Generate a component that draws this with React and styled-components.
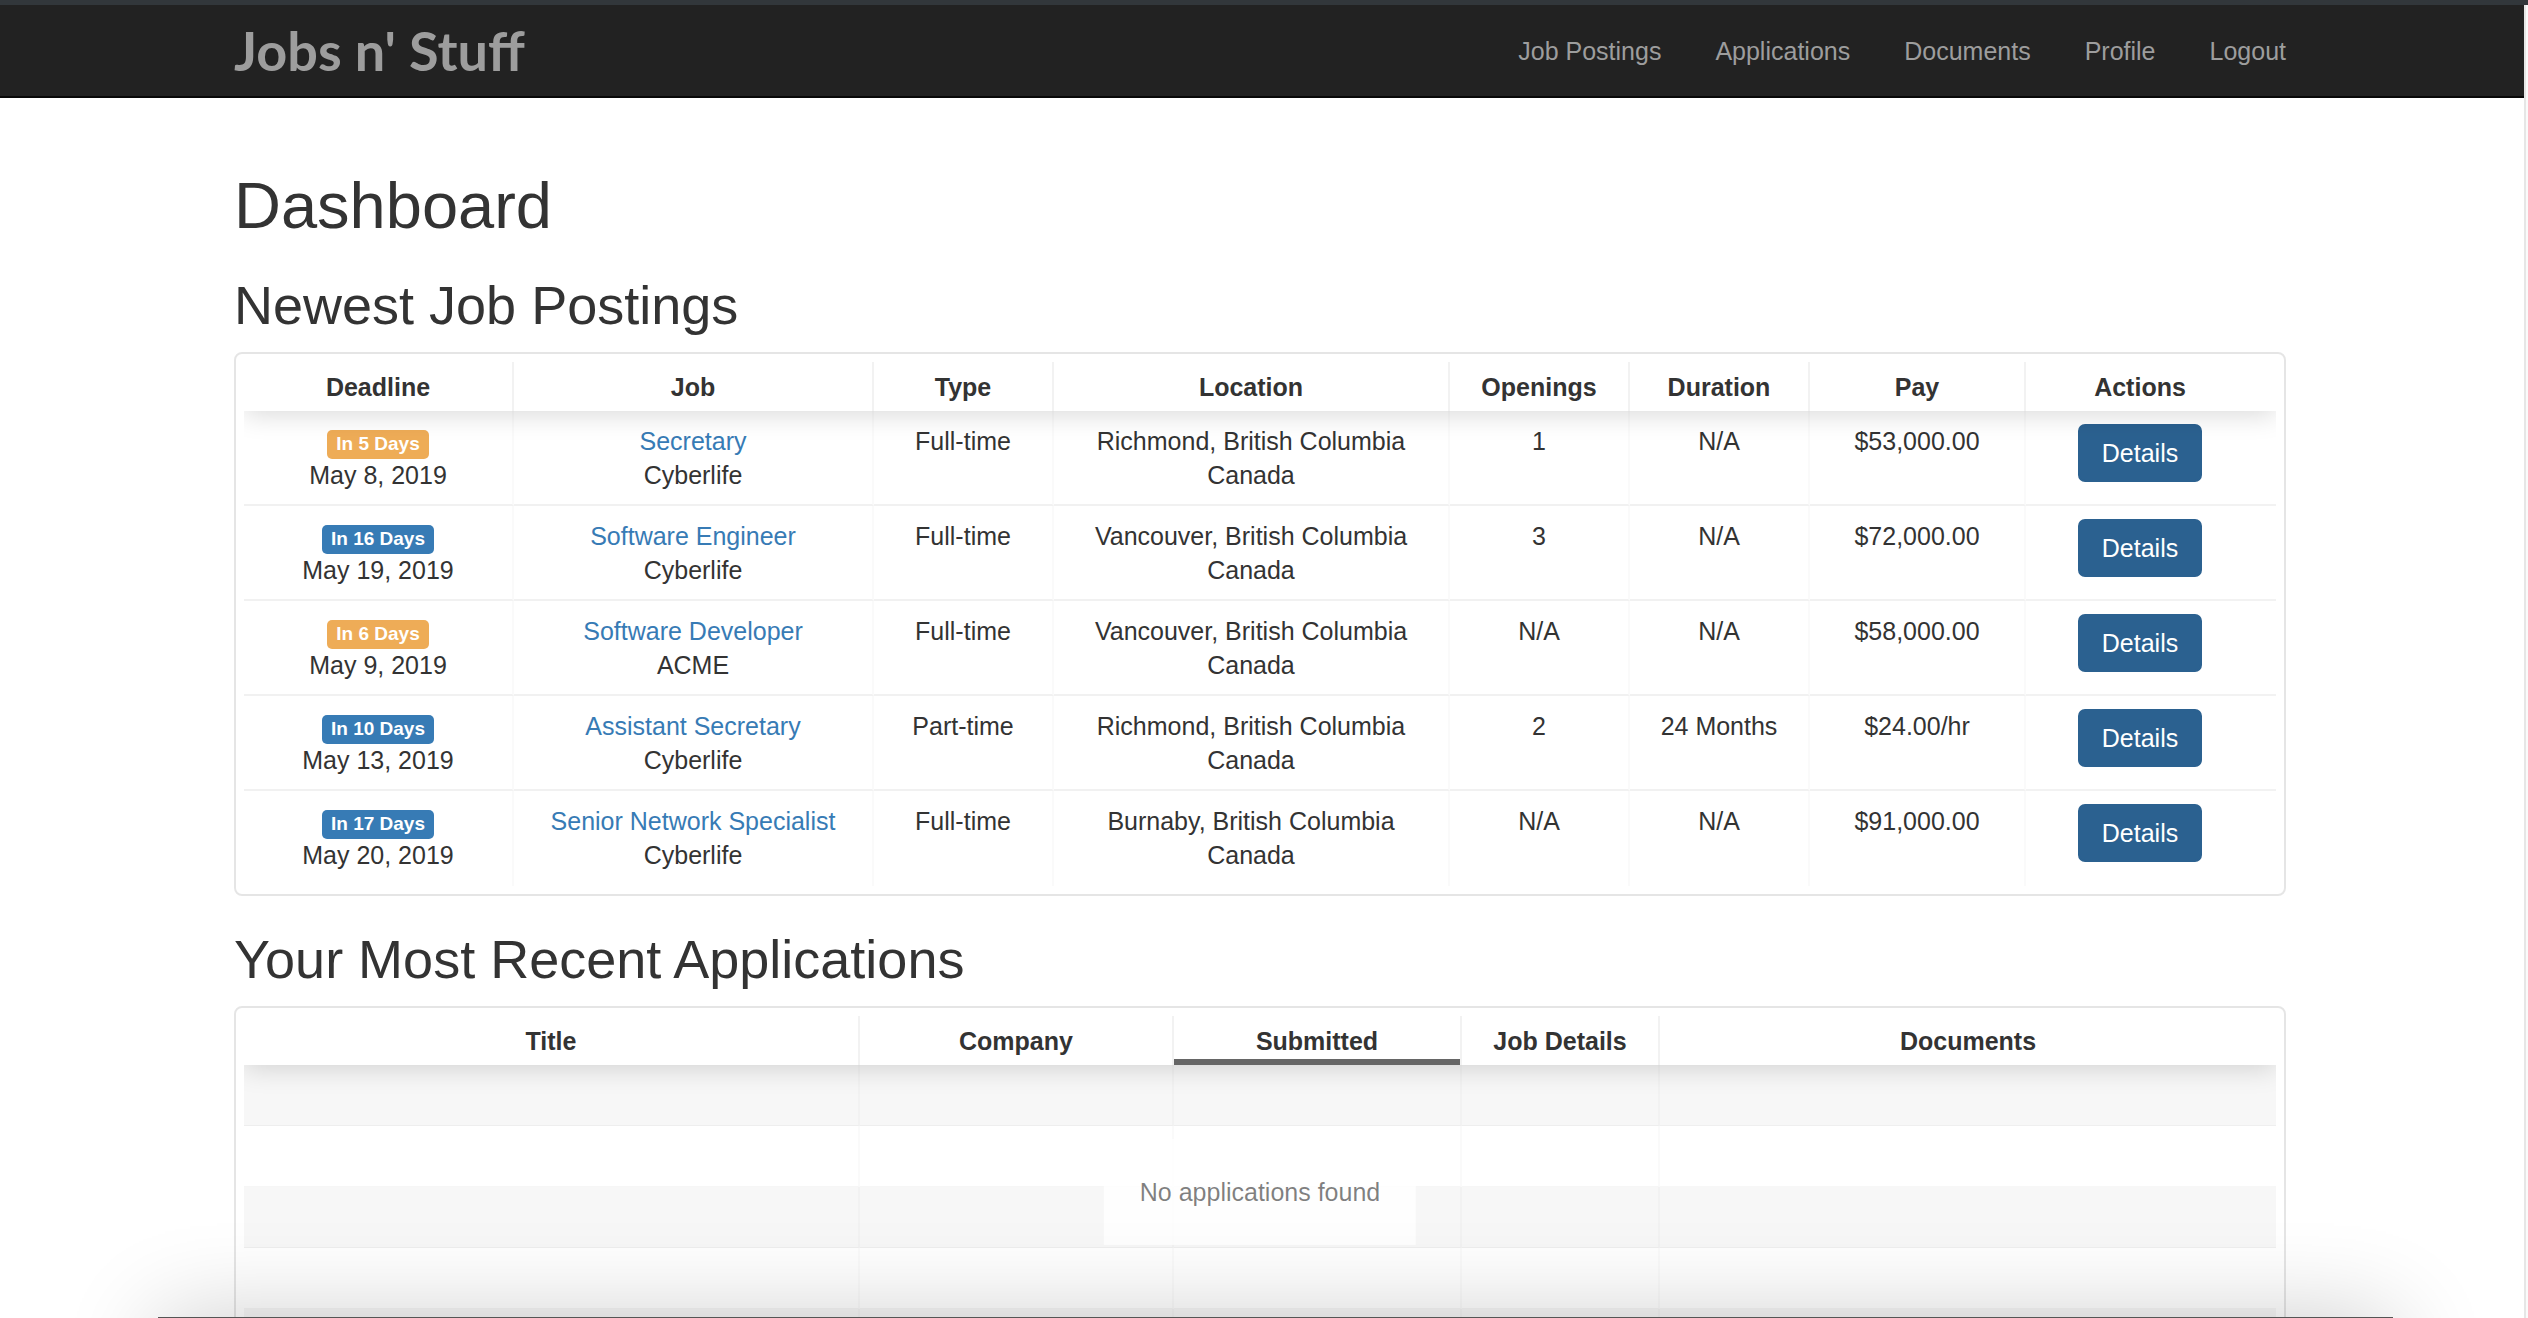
import React from "react";
import styled, { createGlobalStyle } from "styled-components";

const GlobalStyle = createGlobalStyle`
  *, *::before, *::after { box-sizing: border-box; }
  body {
    margin: 0;
    background: #fff;
    color: #333;
    font-family: "Liberation Sans", Arial, Helvetica, sans-serif;
    font-size: 25px;
    line-height: 34px;
  }
`;

const Page = styled.div`
  height: 100vh;
  overflow: hidden;
  position: relative;
  display: flex;
  flex-direction: column;
`;

const WindowEdge = styled.div`
  flex: none;
  height: 5px;
  background: #32373b;
`;

const Viewport = styled.div`
  flex: 1;
  min-height: 0;
  display: flex;
`;

const Content = styled.div`
  flex: 1;
  min-width: 0;
`;

const ScrollTrack = styled.div`
  flex: none;
  width: 4px;
  border-left: 2px solid #e6e6e6;
  background: #fafafa;
`;

const Navbar = styled.header`
  padding: 0 28px 0 24px;
  background: #222;
  border-bottom: 2px solid #080808;
`;

const NavInner = styled.div`
  max-width: 2052px;
  height: 91px;
  margin: 0 auto;
  display: flex;
  align-items: center;
  justify-content: space-between;
`;

const Brand = styled.a`
  color: #9d9d9d;
  font-family: Lato, "Open Sans", sans-serif;
  font-size: 54px;
  font-weight: 700;
  line-height: 65px;
  text-decoration: none;
`;

const NavLinks = styled.nav`
  display: flex;
  gap: 54px;
`;

const NavLink = styled.a`
  color: #9d9d9d;
  line-height: 36px;
  text-decoration: none;
`;

const Main = styled.main`
  padding: 72px 28px 0 24px;
`;

const Container = styled.div`
  max-width: 2052px;
  margin: 0 auto;
`;

const Title = styled.h1`
  margin: 0;
  font-size: 65px;
  font-weight: 400;
  line-height: 72px;
`;

const SectionTitle = styled.h2`
  margin: 33px 0 17px;
  font-size: 54px;
  font-weight: 400;
  line-height: 60px;
`;

const Panel = styled.div`
  position: relative;
  padding: 8px;
  border: 2px solid rgba(0, 0, 0, 0.1);
  border-radius: 8px;
`;

const TableClip = styled.div`
  overflow: hidden;
`;

const Table = styled.table`
  width: 100%;
  table-layout: fixed;
  border-collapse: separate;
  border-spacing: 0;
  text-align: center;
`;

const Head = styled.thead`
  position: relative;
  z-index: 1;
  box-shadow: 0 4px 27px rgba(0, 0, 0, 0.15);
`;

const HeadCell = styled.th`
  width: ${(p) => (p.$width ? `${p.$width}px` : "auto")};
  padding: 8px 9px 7px;
  padding-right: ${(p) => (p.$gutter ? "31px" : "9px")};
  border-right: 2px solid rgba(0, 0, 0, 0.05);
  box-shadow: ${(p) => (p.$sorted ? "inset 0 -6px 0 rgba(0, 0, 0, 0.6)" : "none")};
  font-weight: 700;
  &:last-child { border-right: 0; }
`;

const Cell = styled.td`
  height: 95px;
  padding: 13px 9px 0;
  padding-right: ${(p) => (p.$gutter ? "31px" : "9px")};
  border-right: 2px solid rgba(0, 0, 0, 0.02);
  border-bottom: 2px solid rgba(0, 0, 0, 0.05);
  vertical-align: top;
  &:last-child { border-right: 0; }
  tr:last-child > & { border-bottom: 0; }
`;

const EmptyRow = styled.tr`
  background: ${(p) => (p.$striped ? "rgba(0, 0, 0, 0.03)" : "transparent")};
`;

const EmptyCell = styled.td`
  height: 61px;
  padding: 0;
  border-right: 2px solid rgba(0, 0, 0, 0.02);
  border-bottom: 1px solid rgba(0, 0, 0, 0.03);
  &:last-child { border-right: 0; }
`;

const Badge = styled.span`
  display: inline-block;
  padding: 4px 9px 6px;
  border-radius: 5px;
  background: ${(p) => (p.$soon ? "#eeac57" : "#377bb5")};
  color: #fff;
  font-size: 19px;
  font-weight: 700;
  line-height: 19px;
`;

const Line = styled.div`
  height: 34px;
`;

const JobLink = styled.a`
  color: #377bb5;
  text-decoration: none;
`;

const DetailsButton = styled.button`
  display: block;
  margin: 0 auto;
  padding: 10px 22px;
  border: 2px solid #2b6190;
  border-radius: 7px;
  background: #2b6190;
  color: #fff;
  font: inherit;
  line-height: 34px;
`;

const EmptyMessage = styled.div`
  position: absolute;
  top: 131px;
  left: 50%;
  transform: translateX(-50%);
  padding: 36px;
  background: rgba(255, 255, 255, 0.8);
  color: rgba(0, 0, 0, 0.5);
  white-space: nowrap;
`;

/* Upper edge of the window in front, with the shadow it casts */
const FrontWindow = styled.div`
  position: absolute;
  z-index: 2;
  left: 158px;
  right: 135px;
  bottom: -299px;
  height: 300px;
  background: #555;
  box-shadow: 0 0 90px rgba(0, 0, 0, 0.2);
`;

const navItems = ["Job Postings", "Applications", "Documents", "Profile", "Logout"];

const jobColumns = [
  ["Deadline", 270],
  ["Job", 360],
  ["Type", 180],
  ["Location", 396],
  ["Openings", 180],
  ["Duration", 180],
  ["Pay", 216],
  ["Actions", 0],
];

const jobs = [
  { days: 5, date: "May 8, 2019", title: "Secretary", company: "Cyberlife", type: "Full-time", city: "Richmond", openings: "1", duration: "N/A", pay: "$53,000.00" },
  { days: 16, date: "May 19, 2019", title: "Software Engineer", company: "Cyberlife", type: "Full-time", city: "Vancouver", openings: "3", duration: "N/A", pay: "$72,000.00" },
  { days: 6, date: "May 9, 2019", title: "Software Developer", company: "ACME", type: "Full-time", city: "Vancouver", openings: "N/A", duration: "N/A", pay: "$58,000.00" },
  { days: 10, date: "May 13, 2019", title: "Assistant Secretary", company: "Cyberlife", type: "Part-time", city: "Richmond", openings: "2", duration: "24 Months", pay: "$24.00/hr" },
  { days: 17, date: "May 20, 2019", title: "Senior Network Specialist", company: "Cyberlife", type: "Full-time", city: "Burnaby", openings: "N/A", duration: "N/A", pay: "$91,000.00" },
];

const applicationColumns = [
  ["Title", 0],
  ["Company", 314],
  ["Submitted", 288],
  ["Job Details", 198],
  ["Documents", 0],
];

function JobRow({ job }) {
  return (
    <tr>
      <Cell>
        <Line><Badge $soon={job.days < 10}>{`In ${job.days} Days`}</Badge></Line>
        <Line>{job.date}</Line>
      </Cell>
      <Cell>
        <Line><JobLink href="#job">{job.title}</JobLink></Line>
        <Line>{job.company}</Line>
      </Cell>
      <Cell>{job.type}</Cell>
      <Cell>
        <Line>{`${job.city}, British Columbia`}</Line>
        <Line>Canada</Line>
      </Cell>
      <Cell>{job.openings}</Cell>
      <Cell>{job.duration}</Cell>
      <Cell>{job.pay}</Cell>
      <Cell $gutter>
        <DetailsButton type="button">Details</DetailsButton>
      </Cell>
    </tr>
  );
}

export default function App() {
  return (
    <>
      <GlobalStyle />
      <Page>
        <WindowEdge />
        <Viewport>
          <Content>
            <Navbar>
              <NavInner>
                <Brand href="#home">Jobs n' Stuff</Brand>
                <NavLinks>
                  {navItems.map((item) => (
                    <NavLink href="#nav" key={item}>{item}</NavLink>
                  ))}
                </NavLinks>
              </NavInner>
            </Navbar>
            <Main>
              <Container>
                <Title>Dashboard</Title>

                <SectionTitle>Newest Job Postings</SectionTitle>
                <Panel>
                  <TableClip>
                    <Table>
                      <Head>
                        <tr>
                          {jobColumns.map(([name, width]) => (
                            <HeadCell scope="col" key={name} $width={width} $gutter={name === "Actions"}>{name}</HeadCell>
                          ))}
                        </tr>
                      </Head>
                      <tbody>
                        {jobs.map((job) => <JobRow job={job} key={job.title} />)}
                      </tbody>
                    </Table>
                  </TableClip>
                </Panel>

                <SectionTitle>Your Most Recent Applications</SectionTitle>
                <Panel>
                  <TableClip>
                    <Table>
                      <Head>
                        <tr>
                          {applicationColumns.map(([name, width]) => (
                            <HeadCell scope="col" key={name} $width={width} $sorted={name === "Submitted"}>{name}</HeadCell>
                          ))}
                        </tr>
                      </Head>
                      <tbody>
                        {[0, 1, 2, 3, 4].map((row) => (
                          <EmptyRow key={row} $striped={row % 2 === 0}>
                            {applicationColumns.map(([name]) => <EmptyCell key={name} />)}
                          </EmptyRow>
                        ))}
                      </tbody>
                    </Table>
                  </TableClip>
                  <EmptyMessage>No applications found</EmptyMessage>
                </Panel>
              </Container>
            </Main>
          </Content>
          <ScrollTrack />
        </Viewport>
        <FrontWindow />
      </Page>
    </>
  );
}
